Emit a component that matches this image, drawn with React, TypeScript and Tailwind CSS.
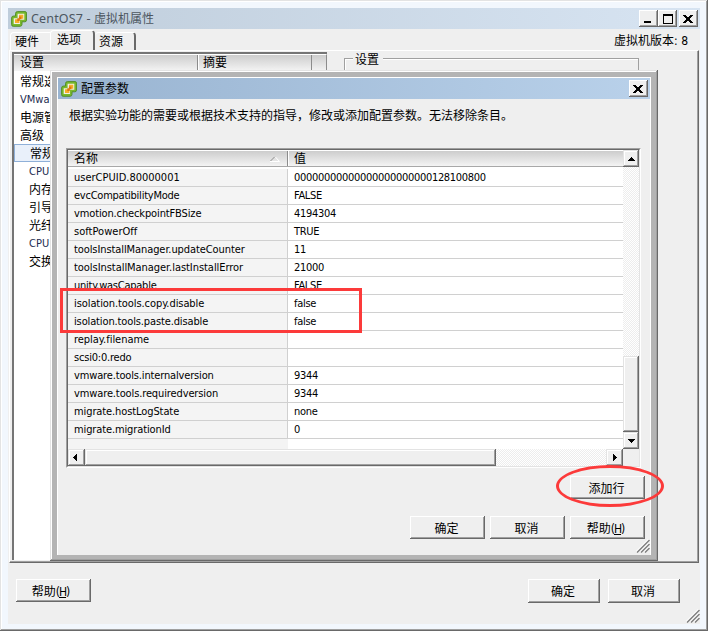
import clsx from "clsx";
import type { ReactNode } from "react";

const params = [
  { name: "userCPUID.80000001", value: "00000000000000000000000128100800", spacing: "tracking-[0px]" },
  { name: "evcCompatibilityMode", value: "FALSE", spacing: "tracking-[-0.24px]" },
  { name: "vmotion.checkpointFBSize", value: "4194304", spacing: "tracking-[-0.13px]" },
  { name: "softPowerOff", value: "TRUE", spacing: "tracking-[0.03px]" },
  { name: "toolsInstallManager.updateCounter", value: "11", spacing: "tracking-[-0.09px]" },
  { name: "toolsInstallManager.lastInstallError", value: "21000", spacing: "tracking-[-0.05px]" },
  { name: "unity.wasCapable", value: "FALSE", spacing: "tracking-[-0.24px]" },
  { name: "isolation.tools.copy.disable", value: "false", spacing: "tracking-[-0.08px]" },
  { name: "isolation.tools.paste.disable", value: "false", spacing: "tracking-[-0.13px]" },
  { name: "replay.filename", value: "", spacing: "tracking-[-0.03px]" },
  { name: "scsi0:0.redo", value: "", spacing: "tracking-[-0.2px]" },
  { name: "vmware.tools.internalversion", value: "9344", spacing: "tracking-[-0.15px]" },
  { name: "vmware.tools.requiredversion", value: "9344", spacing: "tracking-[-0.12px]" },
  { name: "migrate.hostLogState", value: "none", spacing: "tracking-[-0.1px]" },
  { name: "migrate.migrationId", value: "0", spacing: "tracking-[-0.12px]" },
];

const settings = [
  { label: "常规选" },
  { label: "VMwa", latin: true },
  { label: "电源管" },
  { label: "高级" },
  { label: "常规", child: true, selected: true },
  { label: "CPU", child: true, latin: true },
  { label: "内存", child: true },
  { label: "引导", child: true },
  { label: "光纤", child: true },
  { label: "CPU", child: true, latin: true },
  { label: "交换", child: true },
];

const raised =
  "bg-[#efefef] shadow-[inset_-1px_-1px_#696969,inset_1px_1px_#ffffff,inset_-2px_-2px_#a0a0a0]";
const raisedSoft =
  "bg-[#efefef] shadow-[inset_-1px_-1px_#696969,inset_1px_1px_#e3e3e3,inset_-2px_-2px_#a0a0a0,inset_2px_2px_#ffffff]";
const hatch =
  "bg-[conic-gradient(#ffffff_25%,#ededed_0_50%,#ffffff_0_75%,#ededed_0)] bg-[length:2px_2px]";
const headerCell = "bg-linear-to-b from-[#cdcdcd] to-[#f4f4f4]";

function Logo() {
  return (
    <svg className="h-4 w-4 shrink-0" viewBox="0 0 16 16" aria-hidden="true">
      <path
        d="M6.500.6h7.500q1.500 0 1.500 1.500v7q0 1.700-1.700 1.700H11v2.500q0 2-2 2H2.200Q.6 15.300.6 13.700V7Q.6 5 2.600 5H4.500V2.600Q4.500.6 6.500.6z"
        fill="#79b82c"
        stroke="#4d8a26"
        strokeWidth="0.9"
      />
      <path d="M6.600 2.800h6.700v6H9v4.300H2.700V7.200h3.900z" fill="#f1f0e4" />
      <path d="M8 3.800h4.300v4H9v1.500h-.6v2.700H4V8.200h4z" fill="#f6ae2a" />
      <path d="M6.300 7.200h1.600V5.600h2.500v2.600H8.700v1.700H6.300z" fill="#de760f" />
    </svg>
  );
}

function Cross() {
  return (
    <svg
      className="mr-px h-[8px] w-[10px]"
      viewBox="0 0 10 8"
      shapeRendering="crispEdges"
      aria-hidden="true"
    >
      <path
        d="M0 0h3v1h1v1h2V1h1V0h3v1H9v1H8v1H7v2h1v1h1v1h1v1H7V7H6V6H4v1H3v1H0V7h1V6h1V5h1V3H2V2H1V1H0z"
        fill="#000"
      />
    </svg>
  );
}

function Grip() {
  return (
    <svg className="h-[14px] w-[14px]" viewBox="0 0 14 14" aria-hidden="true">
      <path d="M0 13L13 0M4 13L13 4M8 13L13 8" stroke="#fff" strokeWidth="1.500" />
      <path d="M1 13.500L13.500 1M5 13.500L13.500 5M9 13.500L13.500 9" stroke="#808080" strokeWidth="1.500" />
    </svg>
  );
}

function Arrow({ d }: { d: string }) {
  return (
    <svg
      className="h-[7px] w-[7px]"
      viewBox="0 0 7 7"
      shapeRendering="crispEdges"
      aria-hidden="true"
    >
      <path d={d} fill="#000" />
    </svg>
  );
}

function Button({ children, className }: { children: ReactNode; className?: string }) {
  return (
    <button
      className={clsx("flex items-center justify-center pr-[2px] pt-[2px]", raised, className)}
    >
      {children}
    </button>
  );
}

function HelpLabel() {
  return (
    <span className="mr-[2px]">
      帮助
      <span className="tracking-[-1px]">
        (<u>H</u>)
      </span>
    </span>
  );
}

function ConfigDialog() {
  return (
    <div className="absolute left-[50px] top-[70px] flex h-[491px] w-[608px] flex-col bg-[#b4b4b4] p-[7px] pb-[6px] shadow-[inset_-1px_-1px_#696969,inset_1px_1px_#e3e3e3,inset_-2px_-2px_#a0a0a0,inset_2px_2px_#ffffff]">
      <div className="relative flex flex-1 flex-col border border-b-0 border-white bg-[#efefef]">
        <div className="flex h-[21px] items-center bg-linear-to-r from-[#99b4d1] to-[#b9d1ea] pl-[3px] pr-[2px]">
          <Logo />
          <span className="ml-1 flex-1">配置参数</span>
          <button className={clsx("flex h-[17px] w-[19px] items-center justify-center", raised)}>
            <Cross />
          </button>
        </div>
        <p className="ml-[11px] mt-[7px] h-[20px] leading-[20px]">
          根据实验功能的需要或根据技术支持的指导，修改或添加配置参数。无法移除条目。
        </p>

        <div className="ml-[8px] mt-[22px] flex h-[320px] w-[575px] flex-col border border-b-white border-l-[#a0a0a0] border-r-white border-t-[#a0a0a0]">
          <div className="flex h-[318px] flex-col border border-b-[#e3e3e3] border-l-[#696969] border-r-[#e3e3e3] border-t-[#696969]">
            <div className="flex h-[299px]">
              <div className="flex w-[555px] flex-col overflow-hidden bg-white">
                <div className="flex h-[17px] shrink-0 border-b border-t border-b-[#a8a8a8] border-t-white">
                  <div className={clsx("flex w-[220px] items-center justify-between border-r border-r-[#8c8c8c] pl-[6px] pr-[7px]", headerCell)}>
                    <span className="pt-px">名称</span>
                    <svg className="h-[6px] w-[10px]" viewBox="0 0 10 6" aria-hidden="true">
                      <path d="M0 5.500L5 .5" stroke="#8c8c8c" />
                      <path d="M5 .5L9.500 5.500H0" stroke="#fff" fill="none" />
                    </svg>
                  </div>
                  <div className={clsx("flex flex-1 items-center border-l border-l-white pl-[5px] pt-px", headerCell)}>
                    值
                  </div>
                </div>
                {params.map((p, i) => (
                  <div key={p.name} className={clsx("flex shrink-0 font-[DejaVu_Sans_Condensed] text-[11px]", i === 0 ? "h-[20px] pt-[2px]" : "h-[18px]")}>
                    <div className={clsx("flex w-[220px] items-center whitespace-nowrap border-b border-r border-[#d0d0d0] bg-[#f4f4f4] pl-[6px]", p.spacing)}>
                      {p.name}
                    </div>
                    <div className="flex flex-1 items-center border-b border-[#d0d0d0] pl-[6px] tracking-[-0.3px]">
                      {p.value}
                    </div>
                  </div>
                ))}
                <div className="w-[220px] flex-1 bg-[#f4f4f4]" />
              </div>
              <div className={clsx("flex flex-1 flex-col", hatch)}>
                <div className={clsx("flex h-[17px] items-center justify-center", raisedSoft)}>
                  <Arrow d="M3 2h1v1h1v1h1v1h1v1H0V5h1V4h1V3h1z" />
                </div>
                <div className="flex-1" />
                <div className={clsx("h-[76px]", raisedSoft)} />
                <div className={clsx("flex h-[17px] items-center justify-center", raisedSoft)}>
                  <Arrow d="M0 2h7v1H6v1H5v1H4v1H3V5H2V4H1V3H0z" />
                </div>
              </div>
            </div>
            <div className="flex h-[17px] bg-[#efefef]">
              <div className={clsx("flex w-[555px]", hatch)}>
                <div className={clsx("flex w-[17px] items-center justify-center", raisedSoft)}>
                  <Arrow d="M4 0v7H3V6H2V5H1V4H0V3h1V2h1V1h1V0z" />
                </div>
                <div className={clsx("w-[411px]", raisedSoft)} />
                <div className="flex-1" />
                <div className={clsx("flex w-[17px] items-center justify-center", raisedSoft)}>
                  <Arrow d="M2 0v7h1V6h1V5h1V4h1V3H5V2H4V1H3V0z" />
                </div>
              </div>
            </div>
          </div>
        </div>

        <Button className="ml-[512px] mt-[8px] h-[23px] w-[75px]">添加行</Button>
        <div className="ml-[352px] mt-[17px] flex gap-[5px]">
          <Button className="h-[23px] w-[75px]">确定</Button>
          <Button className="h-[23px] w-[75px]">取消</Button>
          <Button className="h-[23px] w-[75px]">
            <HelpLabel />
          </Button>
        </div>
        <div className="absolute bottom-[2px] right-0">
          <Grip />
        </div>
      </div>
    </div>
  );
}

export default function App() {
  return (
    <div className="relative h-[631px] w-[708px] overflow-hidden bg-[#f2f7fd] p-[8px] pb-[7px] font-[DejaVu_Sans_Condensed,Noto_Sans_CJK_SC,sans-serif] text-[12px] leading-none text-black shadow-[inset_-1px_-1px_#696969,inset_1px_1px_#e3e3e3,inset_-2px_-2px_#a0a0a0,inset_2px_2px_#ffffff]">
      <div className="relative flex h-[616px] flex-col bg-[#efefef]">
        <div className="flex h-[21px] items-center bg-linear-to-r from-[#bfcddb] to-[#d7e4f2] pl-[3px] pr-[2px]">
          <Logo />
          <span className="ml-1 flex-1 whitespace-nowrap pt-[2px] font-[Noto_Sans,Noto_Sans_CJK_SC] text-[12px] text-[#4c5660]">
            <span className="text-[12.5px] tracking-[0.15px]">CentOS7 - </span>虚拟机属性
          </span>
          <button className={clsx("flex h-[17px] w-[19px] items-end pb-[4px] pl-[5px]", raised)}>
            <span className="h-[2px] w-[7px] bg-black" />
          </button>
          <button className={clsx("flex h-[17px] w-[19px] items-center justify-center", raised)}>
            <span className="h-[10px] w-[10px] border border-t-2 border-black" />
          </button>
          <button className={clsx("ml-[2px] flex h-[17px] w-[19px] items-center justify-center", raised)}>
            <Cross />
          </button>
        </div>

        <div className="flex h-[21px] items-end pl-[2px]">
          <div className="flex h-[18px] w-[40px] items-center rounded-tl-sm border-l border-t border-white pl-[4px] pt-px">
            硬件
          </div>
          <div className="flex h-[20px] w-[45px] items-center rounded-t-sm border-l border-r-2 border-t border-white border-r-[#696969] pb-px pl-[6px]">
            选项
          </div>
          <div className="flex h-[18px] w-[41px] items-center rounded-t-sm border-r-2 border-t border-t-white border-r-[#696969] pl-[4px] pt-px">
            资源
          </div>
          <div className="mb-[3px] ml-auto mr-[12px]">虚拟机版本: 8</div>
        </div>

        <div className="mx-px flex h-[513px] border border-b-[#696969] border-l-white border-r-[#696969] border-t-white shadow-[inset_-1px_-1px_#a0a0a0]">
          <div className="ml-[2px] mt-px flex h-[508px] w-[315px] flex-col border-l-2 border-t-2 border-[#757575] bg-white">
            <div className="flex h-[17px] border-r border-t border-white border-r-[#8c8c8c]">
              <div className={clsx("flex w-[184px] items-center border-r border-r-[#8c8c8c] pl-[6px]", headerCell)}>
                设置
              </div>
              <div className={clsx("flex w-[114px] items-center border-l border-r border-l-white border-r-[#8c8c8c] pl-[4px]", headerCell)}>
                摘要
              </div>
              <div className={clsx("flex-1", headerCell)} />
            </div>
            <div className="w-[36px] overflow-hidden pt-px">
              {settings.map((s, i) => (
                <div
                  key={i}
                  className={clsx(
                    "flex h-[18px] items-center whitespace-nowrap",
                    s.child ? "pl-[15px]" : "pl-[6px]",
                    s.latin ? "text-[11px] text-[#1c2c50]" : "pt-[2px]",
                    s.selected && "border border-r-0 border-[#8fb0d8] bg-[#e9f0fa]"
                  )}
                >
                  {s.label}
                </div>
              ))}
            </div>
          </div>
          <div className="ml-[17px] mt-[7px] h-[300px] w-[295px] border border-[#a0a0a0] shadow-[inset_1px_1px_#ffffff]">
            <span className="relative left-[8px] top-[-5px] bg-[#efefef] px-[2px] pr-[4px]">设置</span>
          </div>
        </div>

        <div className="mt-[16px] flex pl-[8px]">
          <Button className="h-[23px] w-[75px] pr-[4px]">
            <HelpLabel />
          </Button>
          <Button className="ml-[437px] h-[24px] w-[72px]">确定</Button>
          <Button className="ml-[8px] h-[24px] w-[72px]">取消</Button>
        </div>
        <div className="absolute bottom-[1px] right-0">
          <Grip />
        </div>
      </div>

      <ConfigDialog />

      <div className="absolute left-[60px] top-[288px] h-[45px] w-[302px] border-[3px] border-[#fc3a3a]" />
      <div className="absolute left-[556px] top-[465px] h-[42px] w-[108px] rounded-[50%] border-[3px] border-[#fc3a3a]" />
    </div>
  );
}
